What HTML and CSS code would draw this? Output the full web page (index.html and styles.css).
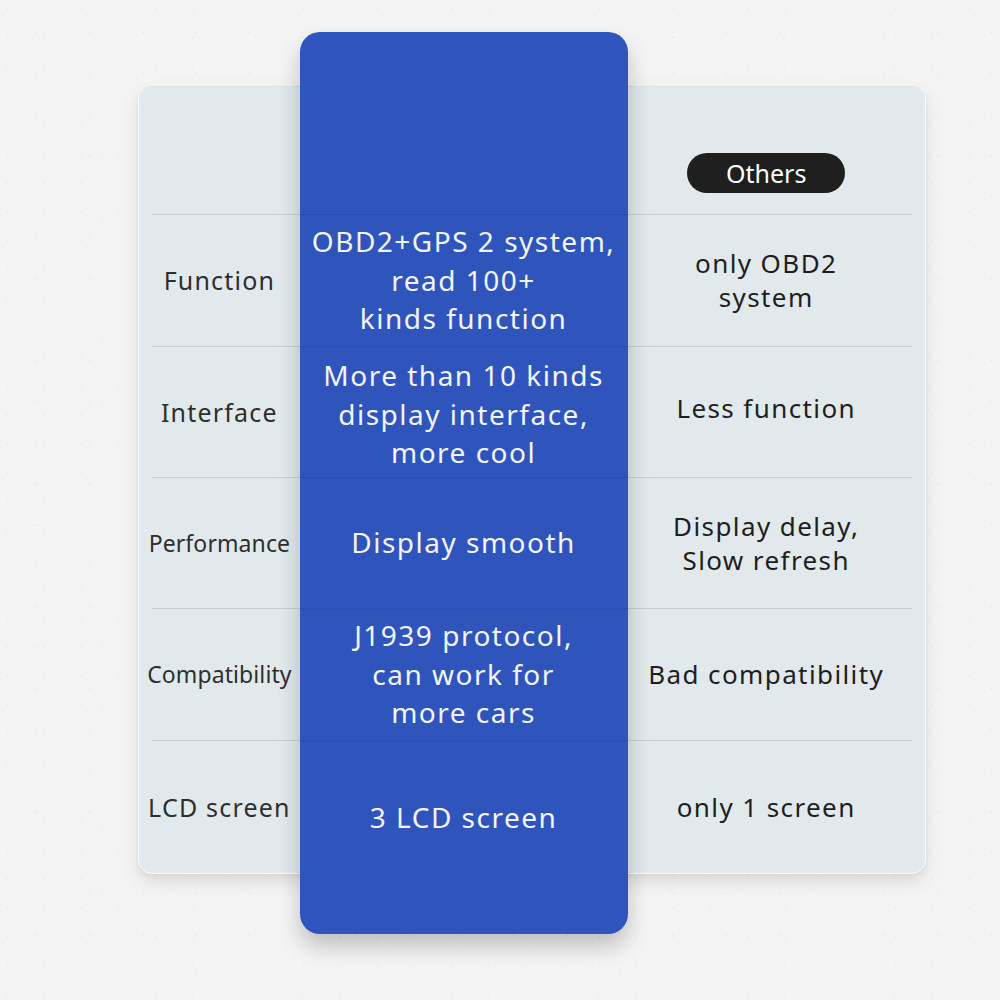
FILE: index.html
```html
<!DOCTYPE html>
<html lang="en">
<head>
<meta charset="utf-8">
<title>Comparison</title>
<link rel="stylesheet" href="styles.css">
</head>
<body>
<main class="page">
  <section class="card">
    <div class="blue-panel"></div>
    <div class="row head">
      <div class="cell label"></div>
      <div class="cell ours"></div>
      <div class="cell other"><span class="pill">Others</span></div>
    </div>
    <div class="row r1">
      <div class="cell label">Function</div>
      <div class="cell ours">OBD2+GPS 2 system,<br>read 100+<br>kinds function</div>
      <div class="cell other">only OBD2<br>system</div>
    </div>
    <div class="row r2">
      <div class="cell label">Interface</div>
      <div class="cell ours">More than 10 kinds<br>display interface,<br>more cool</div>
      <div class="cell other up">Less function</div>
    </div>
    <div class="row r3">
      <div class="cell label narrow">Performance</div>
      <div class="cell ours">Display smooth</div>
      <div class="cell other">Display delay,<br>Slow refresh</div>
    </div>
    <div class="row r4">
      <div class="cell label narrow">Compatibility</div>
      <div class="cell ours">J1939 protocol,<br>can work for<br>more cars</div>
      <div class="cell other">Bad compatibility</div>
    </div>
    <div class="row r5">
      <div class="cell label">LCD screen</div>
      <div class="cell ours last">3 LCD screen</div>
      <div class="cell other">only 1 screen</div>
    </div>
  </section>
</main>
</body>
</html>
```
FILE: styles.css
```css
html, body {
  margin: 0;
  padding: 0;
  background: #f4f4f4;
}
body {
  font-family: "Noto Sans", "Open Sans", sans-serif;
  width: 1000px;
  height: 1000px;
  overflow: hidden;
  background-color: #f4f4f4;
  background-image:
    radial-gradient(circle at 20% 30%, rgba(0, 0, 0, 0.045) 0.7px, transparent 1.1px),
    radial-gradient(circle at 70% 80%, rgba(0, 0, 0, 0.035) 0.7px, transparent 1.1px),
    radial-gradient(circle at 45% 60%, rgba(0, 0, 0, 0.03) 0.7px, transparent 1.1px);
  background-size: 37px 29px, 53px 41px, 71px 61px;
}
.page {
  padding: 84px 0 0 138px;
}
.card {
  position: relative;
  width: 788px;
  height: 790px;
  box-sizing: border-box;
  background: #e1e9ec;
  border: 1px solid #f9fbfc;
  border-radius: 14px;
  box-shadow: 0 8px 18px rgba(0, 0, 0, 0.10), 0 2px 4px rgba(0, 0, 0, 0.05);
  display: flex;
  flex-direction: column;
}
.blue-panel {
  position: absolute;
  left: 161px;
  top: -53px;
  width: 328px;
  height: 902px;
  background: #2f55bd;
  border-radius: 20px;
  box-shadow: 0 12px 22px rgba(0, 0, 0, 0.22);
  z-index: 0;
}
.row {
  position: relative;
  z-index: 1;
  display: flex;
  background: linear-gradient(rgba(20, 40, 50, 0.13), rgba(20, 40, 50, 0.13)) no-repeat 13px 0 / calc(100% - 26px) 1px;
}
.row.head {
  height: 129px;
  background: none;
}
.r1 { height: 132px; }
.r2 { height: 131px; }
.r3 { height: 131px; }
.r4 { height: 132px; }
.r5 { flex: 1; }
.cell {
  display: flex;
  align-items: center;
  justify-content: center;
  text-align: center;
}
.label {
  width: 161px;
  font-size: 25px;
  letter-spacing: 1.2px;
  color: #2e2e2e;
}
.label.narrow {
  letter-spacing: 0.1px;
  font-size: 23px;
}
.ours {
  width: 328px;
  font-size: 28px;
  line-height: 38.5px;
  color: #f2f4fb;
  letter-spacing: 1.5px;
}
.r2 .ours {
  padding-top: 5px;
  box-sizing: border-box;
}
.ours.last {
  padding-top: 22px;
  box-sizing: border-box;
}
.other {
  width: 298px;
  box-sizing: border-box;
  padding-right: 20px;
  font-size: 26px;
  line-height: 34px;
  color: #1e1e1e;
  letter-spacing: 1.4px;
}
.other.up {
  padding-bottom: 8px;
}
.head .other {
  align-items: flex-end;
  padding-bottom: 21px;
}
.pill {
  display: inline-block;
  width: 158px;
  height: 40px;
  line-height: 40px;
  border-radius: 20px;
  background: #1f1f1f;
  color: #fff;
  font-size: 25px;
  letter-spacing: 0;
}
```
